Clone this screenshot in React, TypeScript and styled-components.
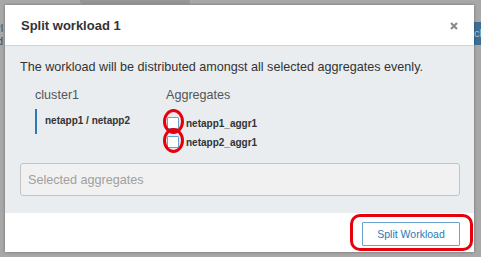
import React from "react";
import styled, { createGlobalStyle } from "styled-components";

const Global = createGlobalStyle`
  html, body { margin: 0; padding: 0; }
  body { font-family: "Liberation Sans", Arial, sans-serif; background: #a9a9a9; }
`;

const Page = styled.div`
  position: relative;
  width: 481px;
  height: 257px;
  overflow: hidden;
  background: #a8a8a8;
  box-sizing: border-box;
  padding: 5px 7px 5px 5px;
  display: flex;
`;

const BackTopBar = styled.div`
  position: absolute;
  left: 80px;
  top: 0;
  width: 110px;
  height: 4px;
  background: #969696;
  border-radius: 0 0 3px 3px;
`;

const BackText = styled.div<{ top: number }>`
  position: absolute;
  left: -3px;
  top: ${(p) => p.top}px;
  font-size: 11px;
  color: #4a4a4a;
  line-height: 1;
`;

const BackButton = styled.div`
  position: absolute;
  left: 474px;
  top: 22px;
  width: 12px;
  height: 23px;
  background: #3d6f96;
  color: #a9c1d4;
  font-size: 11px;
  line-height: 23px;
  overflow: hidden;
`;

const Modal = styled.div`
  position: relative;
  flex: 1;
  display: flex;
  flex-direction: column;
  background: #fff;
  box-shadow: 0 0 3px rgba(0, 0, 0, 0.35);
`;

const Header = styled.div`
  height: 41px;
  display: flex;
  align-items: center;
  justify-content: space-between;
  padding: 0 16px 0 16px;
  border-bottom: 1px solid #d3d3d3;
  box-sizing: border-box;
`;

const Title = styled.h4`
  margin: 0;
  font-size: 13px;
  font-weight: bold;
  color: #333;
`;

const CloseIcon = styled.svg`
  width: 8px;
  height: 8px;
  margin-top: 1px;
`;

const Body = styled.div`
  background: #e9edf0;
  height: 167px;
  box-sizing: border-box;
  padding: 14px 14px 0 15px;
  display: flex;
  flex-direction: column;
`;

const Intro = styled.p`
  margin: 0;
  font-size: 12.6px;
  color: #333;
  line-height: 15px;
`;

const Columns = styled.div`
  display: grid;
  grid-template-columns: 131px 1fr;
  align-items: start;
  margin-top: 13px;
  padding-left: 15px;
`;

const Column = styled.div`
  display: flex;
  flex-direction: column;
`;

const ColHead = styled.div`
  font-size: 12.6px;
  color: #555;
  line-height: 15px;
  margin-bottom: 6px;
`;

const Cluster = styled.div`
  border-left: 2.5px solid #2b79b5;
  height: 25px;
  padding-left: 8px;
  font-size: 10px;
  font-weight: bold;
  color: #333;
  line-height: 24px;
`;

const AggList = styled.div`
  display: flex;
  flex-direction: column;
  gap: 7px;
  margin-top: 8px;
`;

const AggRow = styled.label`
  display: flex;
  align-items: center;
  gap: 7px;
  font-size: 10px;
  font-weight: bold;
  color: #333;
  height: 12px;
`;

const BoxWrap = styled.span`
  position: relative;
  width: 12px;
  height: 12px;
  margin-left: 1px;
`;

const Box = styled.span`
  display: block;
  width: 12px;
  height: 12px;
  box-sizing: border-box;
  border: 1px solid #6aa1cf;
  background: #fff;
  border-radius: 1px;
`;

const RedRing = styled.span`
  position: absolute;
  left: -4px;
  top: -8px;
  width: 21px;
  height: 25px;
  box-sizing: border-box;
  border: 3px solid #e5000c;
  border-radius: 50%;
`;

const SelectBox = styled.div`
  margin-top: 15px;
  height: 33px;
  box-sizing: border-box;
  background: #f1f1f1;
  border: 1px solid #c4c4c4;
  border-radius: 3px;
  display: flex;
  align-items: center;
  padding-left: 7px;
  font-size: 12.6px;
  color: #a0a0a0;
`;

const Footer = styled.div`
  flex: 1;
  display: flex;
  justify-content: flex-end;
  align-items: flex-start;
  padding: 9px 14px 0 0;
`;

const ButtonWrap = styled.div`
  position: relative;
`;

const Button = styled.button`
  width: 98px;
  height: 24px;
  background: #fff;
  border: 1px solid #6aa1cf;
  border-radius: 1px;
  color: #2b79b5;
  font-family: "Liberation Sans", Arial, sans-serif;
  font-size: 10.5px;
  padding: 0;
`;

const RedRect = styled.span`
  position: absolute;
  left: -12px;
  top: -8px;
  width: 123px;
  height: 37px;
  box-sizing: border-box;
  border: 3px solid #e5000c;
  border-radius: 10px;
`;

const aggregates = ["netapp1_aggr1", "netapp2_aggr1"];

export default function App() {
  return (
    <Page>
      <Global />
      <BackTopBar />
      <BackText top={23}>rl</BackText>
      <BackText top={36}>d</BackText>
      <BackButton>ck</BackButton>
      <Modal>
        <Header>
          <Title>Split workload 1</Title>
          <CloseIcon viewBox="0 0 8 8" aria-label="Close">
            <path d="M1 1 L7 7 M7 1 L1 7" stroke="#8c8c8c" strokeWidth="2.2" strokeLinecap="butt" />
          </CloseIcon>
        </Header>
        <Body>
          <Intro>The workload will be distributed amongst all selected aggregates evenly.</Intro>
          <Columns>
            <Column>
              <ColHead>cluster1</ColHead>
              <Cluster>netapp1 / netapp2</Cluster>
            </Column>
            <Column>
              <ColHead>Aggregates</ColHead>
              <AggList>
                {aggregates.map((a) => (
                  <AggRow key={a}>
                    <BoxWrap>
                      <Box />
                      <RedRing />
                    </BoxWrap>
                    {a}
                  </AggRow>
                ))}
              </AggList>
            </Column>
          </Columns>
          <SelectBox>Selected aggregates</SelectBox>
        </Body>
        <Footer>
          <ButtonWrap>
            <Button>Split Workload</Button>
            <RedRect />
          </ButtonWrap>
        </Footer>
      </Modal>
    </Page>
  );
}
